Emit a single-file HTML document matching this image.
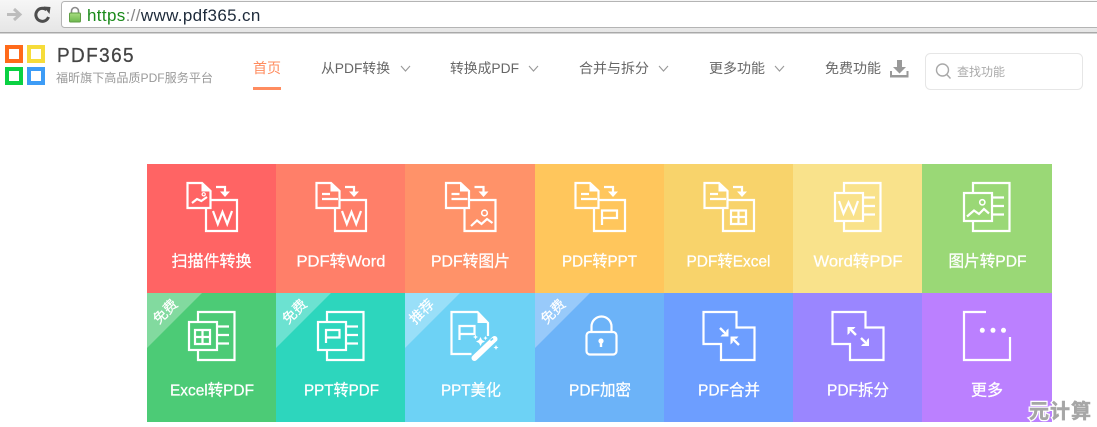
<!DOCTYPE html>
<html><head><meta charset="utf-8"><title>PDF365</title>
<style>
html,body{margin:0;padding:0;background:#fff;width:1097px;height:427px;overflow:hidden}
svg{display:block}
text{font-family:"Liberation Sans","Noto Sans CJK SC",sans-serif}
.l{font-size:16px;fill:#fff;text-anchor:middle;stroke:#fff;stroke-width:.25}
.n{font-size:13.5px;fill:#666}
.r{font-size:14px;fill:#fff;text-anchor:middle;stroke:#fff;stroke-width:.2}
.i{fill:none;stroke:#fff;stroke-width:2.2}
</style></head><body>
<svg width="1097" height="427" viewBox="0 0 1097 427" xmlns="http://www.w3.org/2000/svg">
<defs>
<linearGradient id="c" x1="0" y1="0" x2="0" y2="1"><stop offset="0" stop-color="#f6f6f6"/><stop offset="1" stop-color="#e6e6e6"/></linearGradient>
<linearGradient id="k" x1="0" y1="0" x2="0" y2="1"><stop offset="0" stop-color="#a8dc80"/><stop offset="1" stop-color="#6db84e"/></linearGradient>
<g id="doc"><path class="i" d="M40.5,19 H55 L63.5,27 V44 H40.5 Z"/><path d="M55,19 L63.5,27 H55 Z" fill="#fff" stroke="#fff"/></g>
<g id="docl" class="i"><path d="M46,30 H54 M46,35 H62"/></g>
<g id="box" class="i"><path d="M64,36 H90 V67 H59 V44"/><path d="M69,23 H78 V29"/></g>
<path id="ah" d="M73,27.5 H83 L78,33 Z" fill="#fff"/>
<g id="two" class="i"><path d="M51,28 V19 H87.5 V67 H51 V57.5"/><rect x="42" y="29" width="28" height="28"/><path d="M70,33.5 H82 M70,42 H82 M70,50.5 H82"/></g>
<polyline id="w" class="i" points="66,47 70.8,60 75.5,48 80.2,60 85,47"/>
</defs>

<!-- browser chrome -->
<rect width="1097" height="32" fill="url(#c)"/>
<rect y="32" width="1097" height="1.5" fill="#a9a9a9"/>
<rect x="61.5" y="1.5" width="1040" height="26" rx="3" fill="#fff" stroke="#b4b4b4"/>
<path d="M7,14.5 H19 M14,9 L20,14.5 L14,20" fill="none" stroke="#bdbdbd" stroke-width="3"/>
<path d="M48.5,17 A6.5,6.5 0 1 1 46.5,9.8" fill="none" stroke="#4d4d4d" stroke-width="3"/>
<path d="M43.5,6.5 L50.5,7 L49.5,14 Z" fill="#4d4d4d"/>
<path d="M71.5,13 V11 a3.5,3.5 0 0 1 7,0 V13" fill="none" stroke="#8a8a8a" stroke-width="1.6"/>
<rect x="69.5" y="13" width="11" height="9" rx="1" fill="url(#k)" stroke="#5f9e44" stroke-width="1"/>
<text x="87" y="21" font-size="17" letter-spacing=".35"><tspan fill="#1a8a1a">https</tspan><tspan fill="#888">://</tspan><tspan fill="#1d2a3a">www.pdf365.cn</tspan></text>

<!-- logo -->
<g fill="none" stroke-width="4">
<rect x="7" y="47" width="14" height="14" stroke="#ff6a1a"/>
<rect x="29" y="47" width="14" height="14" stroke="#f6dc3a"/>
<rect x="7" y="69" width="14" height="14" stroke="#0ad142"/>
<rect x="29" y="69" width="14" height="14" stroke="#3d9cf6"/>
</g>
<text x="57" y="62" font-size="20" fill="#444" stroke="#444" stroke-width=".3" letter-spacing="1.5" textLength="78" lengthAdjust="spacingAndGlyphs">PDF365</text>
<text x="56" y="82" font-size="12" fill="#999" textLength="157" lengthAdjust="spacingAndGlyphs">福昕旗下高品质PDF服务平台</text>

<!-- nav -->
<text x="253" y="73" font-size="14" fill="#ff8c5f">首页</text>
<rect x="253" y="87" width="28" height="3" fill="#ff8c5f"/>
<text class="n" x="321" y="73" textLength="69" lengthAdjust="spacingAndGlyphs">从PDF转换</text>
<text class="n" x="450" y="73" textLength="69" lengthAdjust="spacingAndGlyphs">转换成PDF</text>
<text class="n" x="579" y="73" textLength="70" lengthAdjust="spacingAndGlyphs">合并与拆分</text>
<text class="n" x="709" y="73" textLength="56" lengthAdjust="spacingAndGlyphs">更多功能</text>
<text class="n" x="825" y="73" textLength="56" lengthAdjust="spacingAndGlyphs">免费功能</text>
<g fill="none" stroke="#999" stroke-width="1.1">
<path d="M401,66 L405.5,71 L410,66"/><path d="M529,66 L533.5,71 L538,66"/><path d="M659,66 L663.5,71 L668,66"/><path d="M775,66 L779.5,71 L784,66"/>
</g>
<path d="M897,60 H902 V67 H906 L899.5,73.5 L893,67 H897 Z" fill="#999"/>
<path d="M891,71 V76.5 H907.5 V71" fill="none" stroke="#999" stroke-width="2"/>
<path d="M890,75 H908 V77.5 H890 Z" fill="#999"/>
<rect x="925.5" y="53.5" width="157" height="36" rx="5" fill="#fff" stroke="#e6e6e6"/>
<circle cx="942.5" cy="70" r="6" fill="none" stroke="#a8a8a8" stroke-width="1.4"/>
<path d="M946.8,74.5 L950.5,78.5" stroke="#a8a8a8" stroke-width="1.4"/>
<text x="957" y="76" font-size="12" fill="#aaa">查找功能</text>

<!-- tiles -->
<rect x="147" y="164" width="129" height="129" fill="#ff6464"/>
<rect x="276" y="164" width="129.5" height="129" fill="#ff7f69"/>
<rect x="405" y="164" width="130" height="129" fill="#ff9269"/>
<rect x="535" y="164" width="129" height="129" fill="#ffc65c"/>
<rect x="664" y="164" width="129" height="129" fill="#f8d36b"/>
<rect x="793" y="164" width="129" height="129" fill="#f9e28b"/>
<rect x="922" y="164" width="130" height="129" fill="#9ad876"/>
<rect x="147" y="293" width="129" height="129" fill="#4ccb76"/>
<rect x="276" y="293" width="129.5" height="129" fill="#2dd6bd"/>
<rect x="405" y="293" width="130" height="129" fill="#6dd2f5"/>
<rect x="535" y="293" width="129" height="129" fill="#6cb3f8"/>
<rect x="664" y="293" width="129" height="129" fill="#6d9eff"/>
<rect x="793" y="293" width="129" height="129" fill="#9a86ff"/>
<rect x="922" y="293" width="130" height="129" fill="#bb80ff"/>

<!-- row 1 icons -->
<g transform="translate(147,164)"><use href="#doc"/><use href="#box"/><use href="#ah"/><use href="#w"/>
<path class="i" d="M45,39 L50,35 L54.3,37 L60,33" stroke-width="1.6"/><circle cx="56.7" cy="30.3" r="1.6" fill="none" stroke="#fff" stroke-width="1.2"/></g>
<g transform="translate(276,164)"><use href="#doc"/><use href="#docl"/><use href="#box"/><use href="#ah"/><use href="#w"/></g>
<g transform="translate(405.5,164)"><use href="#doc"/><use href="#docl"/><use href="#box"/><use href="#ah"/>
<circle cx="79" cy="49" r="2.8" fill="none" stroke="#fff" stroke-width="1.6"/><path class="i" d="M65.5,62 L71.5,56.5 L76,60 L81.5,55 L87,59"/></g>
<g transform="translate(535,164)"><use href="#doc"/><use href="#docl"/><use href="#box"/><use href="#ah"/><path class="i" d="M67,61 V46.5 H82 V54 H67"/></g>
<g transform="translate(664,164)"><use href="#doc"/><use href="#docl"/><use href="#box"/><use href="#ah"/><path class="i" d="M67,46.5 H82 V60 H67 Z M74.5,46.5 V60 M67,53 H82"/></g>
<g transform="translate(793,164)"><use href="#two"/><polyline class="i" points="46,37 50.5,49.5 55.5,38.5 60.5,49.5 65,37"/></g>
<g transform="translate(922,164)"><use href="#two"/><circle cx="60.3" cy="38.3" r="2.6" fill="none" stroke="#fff" stroke-width="1.6"/><path class="i" d="M45,52.5 L52,46.5 L57,50 L62,45 L67,49.5"/></g>

<!-- row 2 icons -->
<g transform="translate(147,293)"><use href="#two"/><path class="i" d="M48,37 H63 V51 H48 Z M55.5,37 V51 M48,44 H63"/></g>
<g transform="translate(276,293)"><use href="#two"/><path class="i" d="M50,50 V37 H63.5 V44.5 H50"/></g>
<g transform="translate(405.5,293)">
<path class="i" d="M66,61 H46 V19 H72 L82.5,30 V43"/><path d="M72,19 L82.5,30 H72 Z" fill="#fff"/>
<path class="i" d="M54,47 V33 H69 V41 H54"/>
<path d="M69,65 L89,46" stroke="#fff" stroke-width="6" stroke-linecap="round"/><path d="M85,47.5 L87.5,45.5" stroke="#6dd2f5" stroke-width="1.6"/>
<path d="M75,44 L76.5,47 L79.5,48.5 L76.5,50 L75,53 L73.5,50 L70.5,48.5 L73.5,47 Z M70,41.5 l.8,1.7 1.7,.8 -1.7,.8 -.8,1.7 -.8,-1.7 -1.7,-.8 1.7,-.8 Z M90.5,52 l.8,1.7 1.7,.8 -1.7,.8 -.8,1.7 -.8,-1.7 -1.7,-.8 1.7,-.8 Z M80,43 l.7,1.4 1.4,.7 -1.4,.7 -.7,1.4 -.7,-1.4 -1.4,-.7 1.4,-.7 Z" fill="#fff"/>
</g>
<g transform="translate(535,293)">
<rect class="i" x="51.5" y="39" width="30" height="22.5" rx="3.5"/>
<path class="i" d="M56.5,39 V33.5 a10,10 0 0 1 20,0 V39"/>
<circle cx="66" cy="48" r="2.6" fill="#fff"/><rect x="64.8" y="48" width="2.4" height="6" fill="#fff"/>
</g>
<g transform="translate(664,293)">
<path class="i" d="M39.5,19 H72.5 V34.5 H90.5 V67 H57 V51 H39.5 Z"/>
<path d="M56,35 L63,42" stroke="#fff" stroke-width="2.4"/><path d="M64.5,35.5 V43.5 H56.5 L58.5,41.2 H62.2 V37.6 Z" fill="#fff"/>
<path d="M75,52 L68,45" stroke="#fff" stroke-width="2.4"/><path d="M66.5,51.5 V43.5 H74.5 L72.5,45.8 H68.8 V49.4 Z" fill="#fff"/>
</g>
<g transform="translate(793,293)">
<path class="i" d="M39.5,19 H72.5 V34.5 H90.5 V67 H57 V51 H39.5 Z"/>
<path d="M63,42 L56,35" stroke="#fff" stroke-width="2.4"/><path d="M54.5,42 V34 H62.5 L60.5,36.3 H56.8 V39.9 Z" fill="#fff"/>
<path d="M68,45 L75,52" stroke="#fff" stroke-width="2.4"/><path d="M76,45 V53 H68 L70,50.7 H73.7 V47.1 Z" fill="#fff"/>
</g>
<g transform="translate(922,293)">
<path class="i" d="M64,19 H42 V67 H88 V44"/>
<circle cx="60.3" cy="37.3" r="2.5" fill="#fff"/><circle cx="71" cy="37.3" r="2.5" fill="#fff"/><circle cx="81.5" cy="37.3" r="2.5" fill="#fff"/>
</g>

<!-- ribbons -->
<g fill="#fff" fill-opacity=".3">
<path d="M147,293 H202 L147,348 Z"/><path d="M276,293 H331 L276,348 Z"/><path d="M405,293 H460 L405,348 Z"/><path d="M535,293 H590 L535,348 Z"/>
</g>
<text class="r" transform="translate(168.8,315) rotate(-45)">免费</text>
<text class="r" transform="translate(298,315) rotate(-45)">免费</text>
<text class="r" transform="translate(425.2,315) rotate(-45)">推荐</text>
<text class="r" transform="translate(556.5,315) rotate(-45)">免费</text>

<!-- labels -->
<text class="l" x="211.5" y="266.5">扫描件转换</text>
<text class="l" x="341" y="266.5" textLength="89" lengthAdjust="spacingAndGlyphs">PDF转Word</text>
<text class="l" x="470.5" y="266.5" textLength="79" lengthAdjust="spacingAndGlyphs">PDF转图片</text>
<text class="l" x="599.5" y="266.5" textLength="75" lengthAdjust="spacingAndGlyphs">PDF转PPT</text>
<text class="l" x="728.5" y="266.5" textLength="84" lengthAdjust="spacingAndGlyphs">PDF转Excel</text>
<text class="l" x="858" y="266.5" textLength="89" lengthAdjust="spacingAndGlyphs">Word转PDF</text>
<text class="l" x="987.5" y="266.5" textLength="78" lengthAdjust="spacingAndGlyphs">图片转PDF</text>
<text class="l" x="212" y="395.5" textLength="84" lengthAdjust="spacingAndGlyphs">Excel转PDF</text>
<text class="l" x="341.5" y="395.5" textLength="75" lengthAdjust="spacingAndGlyphs">PPT转PDF</text>
<text class="l" x="471" y="395.5" textLength="60" lengthAdjust="spacingAndGlyphs">PPT美化</text>
<text class="l" x="600" y="395.5" textLength="62" lengthAdjust="spacingAndGlyphs">PDF加密</text>
<text class="l" x="729" y="395.5" textLength="62" lengthAdjust="spacingAndGlyphs">PDF合并</text>
<text class="l" x="858" y="395.5" textLength="62" lengthAdjust="spacingAndGlyphs">PDF拆分</text>
<text class="l" x="987" y="395.5">更多</text>

<!-- watermark -->
<text x="1029" y="418" font-size="20" font-weight="bold" fill="#fff" stroke="#fff" stroke-width="3" letter-spacing="1">元计算</text>
<text x="1029" y="418" font-size="20" font-weight="bold" fill="#a6a6a6" stroke="#a6a6a6" stroke-width=".5" letter-spacing="1">元计算</text>
</svg>
</body></html>
